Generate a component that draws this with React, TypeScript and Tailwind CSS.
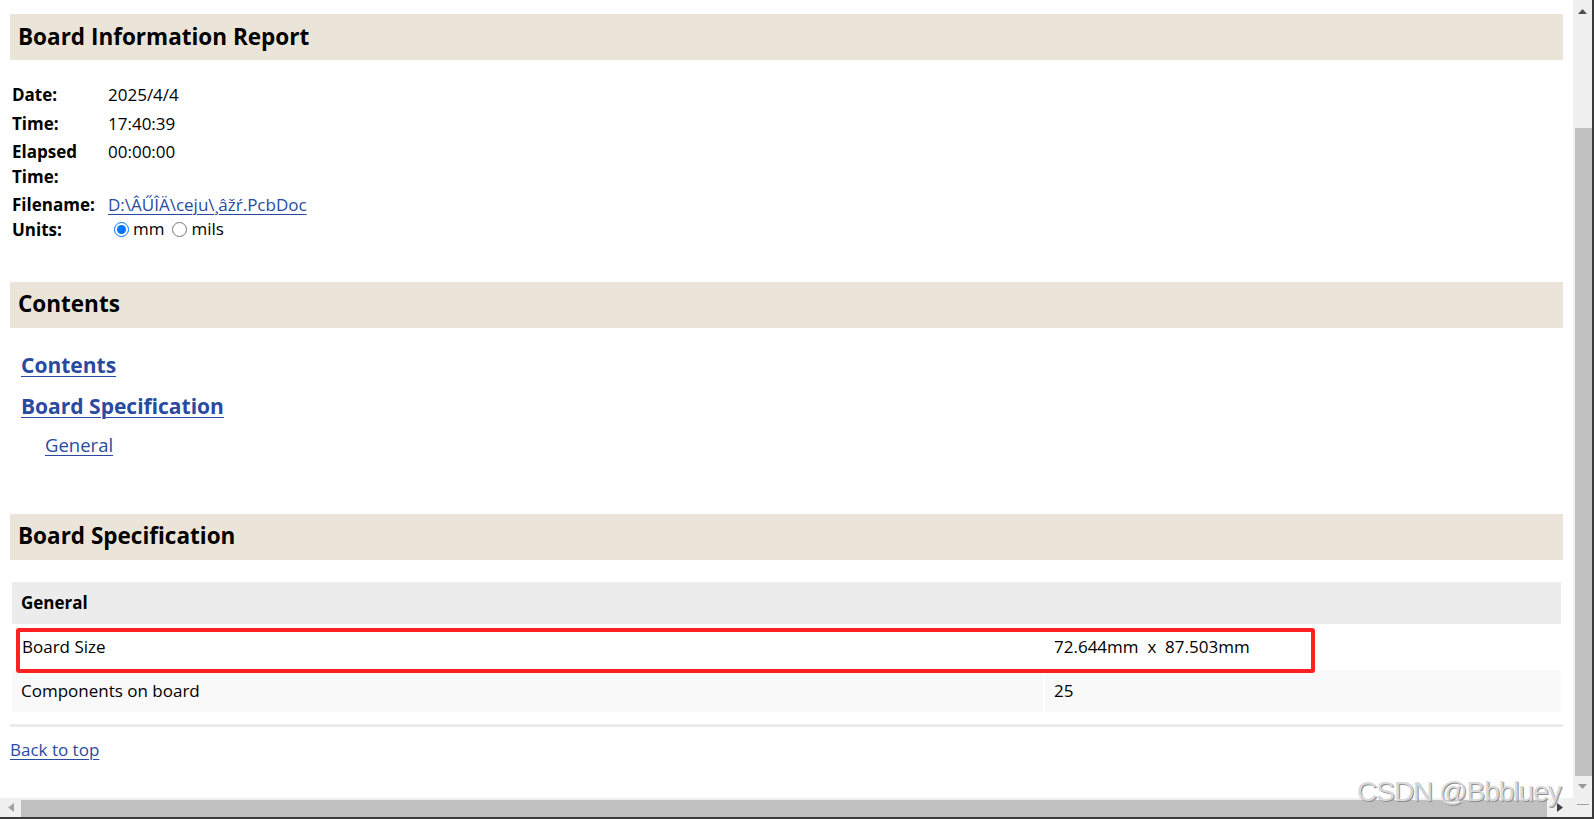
import React from 'react';

const linkCls = "text-[#2a4a9f] underline underline-offset-[3px] decoration-[1px]";

const SectionHeader = ({ title }: { title: string }) => (
  <div className="h-[46px] bg-[#ebe5d9] flex items-center pl-[8px]">
    <h2 className="text-[22.5px] font-bold leading-none">{title}</h2>
  </div>
);

const InfoRow = ({ label, children }: { label: string; children: React.ReactNode }) => (
  <>
    <div className="font-bold py-[2px] pr-[4px]">{label}</div>
    <div className="py-[2px]">
      <div className="min-h-[24.5px]">{children}</div>
    </div>
  </>
);

const VScrollbar = () => (
  <div className="w-[19px] bg-[#f0f0f0] flex flex-col">
    <div className="h-[17px] flex items-start justify-center pt-[9px]">
      <svg width="9" height="5" viewBox="0 0 9 5"><path d="M4.5 0L9 5H0z" fill="#505050" /></svg>
    </div>
    <div className="h-[111px]" />
    <div className="h-[648px] ml-[2px] bg-[#c0c0c0]" />
    <div className="h-[22px] flex items-start justify-center pt-[8px]">
      <svg width="9" height="5" viewBox="0 0 9 5"><path d="M0 0H9L4.5 5z" fill="#9a9a9a" /></svg>
    </div>
  </div>
);

const HScrollbar = () => (
  <div className="h-[19px] flex">
    <div className="flex-1 bg-[#f0f0f0] flex items-center">
      <div className="w-[21px] flex justify-center pl-[1px]">
        <svg width="6" height="9" viewBox="0 0 6 9"><path d="M6 0V9L0 4.5z" fill="#a3a3a3" /></svg>
      </div>
      <div className="w-[1526px] h-[17px] self-end bg-[#c0c0c0]" />
      <div className="flex-1 flex justify-center pr-[1px]">
        <svg width="6" height="9" viewBox="0 0 6 9"><path d="M0 0V9L6 4.5z" fill="#404040" /></svg>
      </div>
    </div>
    <div className="w-[19px] bg-[#f0f0f0] flex items-start justify-center pt-[6px]">
      <div className="w-[12px] h-[1px] bg-[#a0a0a0]" />
    </div>
  </div>
);

export default function App() {
  return (
    <div className="relative w-[1594px] h-[819px] overflow-hidden bg-white border-r-2 border-b-2 border-[#3a3a3a] text-black text-[17px] font-['Open_Sans','Noto_Sans',sans-serif]">
      <div className="flex h-[798px]">
        <main className="flex-1 overflow-hidden px-[10px] pt-[14px]">
          <SectionHeader title="Board Information Report" />

          <div className="mt-[21px] ml-[2px] grid grid-cols-[96px_1fr] leading-[24.5px]">
            <InfoRow label="Date:">2025/4/4</InfoRow>
            <InfoRow label="Time:">17:40:39</InfoRow>
            <InfoRow label="Elapsed Time:">00:00:00</InfoRow>
            <InfoRow label="Filename:">
              <div className="h-[24.5px]">
                <a href="#" className={linkCls}>D:\ÂŰÎÄ\ceju\¸âžŕ.PcbDoc</a>
              </div>
            </InfoRow>
            <div className="font-bold leading-[20px]">Units:</div>
            <div className="h-[20px] flex items-center">
              <input type="radio" name="units" defaultChecked className="m-0 ml-[6px] w-[15px] h-[15px] accent-[#0075ff]" />
              <span className="ml-[4px]">mm</span>
              <input type="radio" name="units" className="m-0 ml-[8px] w-[15px] h-[15px]" />
              <span className="ml-[4px]">mils</span>
            </div>
          </div>

          <div className="mt-[42px]">
            <SectionHeader title="Contents" />
          </div>

          <nav className="flex flex-col">
            <a href="#" className={`${linkCls} mt-[22px] ml-[11px] self-start text-[21px] font-bold leading-[30px]`}>Contents</a>
            <a href="#" className={`${linkCls} mt-[11px] ml-[11px] self-start text-[21px] font-bold leading-[30px]`}>Board Specification</a>
            <a href="#" className={`${linkCls} mt-[11px] ml-[35px] self-start text-[18.5px] leading-[26px]`}>General</a>
          </nav>

          <div className="mt-[56px]">
            <SectionHeader title="Board Specification" />
          </div>

          <div className="relative mt-[20px]">
            <div className="flex flex-col gap-[2px] p-[2px]">
              <div className="h-[42px] bg-[#ececec] flex items-center pl-[9px] font-bold">General</div>
              <div className="h-[42px] grid grid-cols-[1fr_516px] gap-[2px]">
                <div className="bg-white flex items-center pl-[10px]">Board Size</div>
                <div className="bg-white flex items-center pl-[9px] whitespace-pre">72.644mm  x  87.503mm</div>
              </div>
              <div className="h-[42px] grid grid-cols-[1fr_516px] gap-[2px]">
                <div className="bg-[#f9f9f9] flex items-center pl-[9px]">Components on board</div>
                <div className="bg-[#f9f9f9] flex items-center pl-[9px]">25</div>
              </div>
            </div>
            <div className="absolute left-[6px] top-[48px] w-[1299px] h-[45px] border-4 border-[#ff2020] rounded-[3px]" />
          </div>

          <div className="mt-[10px] h-[3px] bg-[#ececec]" />

          <a href="#" className={`${linkCls} inline-block mt-[11px] leading-[24px]`}>Back to top</a>
        </main>
        <VScrollbar />
      </div>
      <HScrollbar />

      <div className="absolute left-[1357px] top-[778px] text-[28px] leading-none tracking-[-1px] text-[#d8d8d8] font-['Liberation_Sans',Arial,sans-serif] whitespace-nowrap [text-shadow:1px_1px_0_#8f8f8f,-1px_-1px_0_#ffffff]">
        CSDN @Bbbluey
      </div>
    </div>
  );
}
